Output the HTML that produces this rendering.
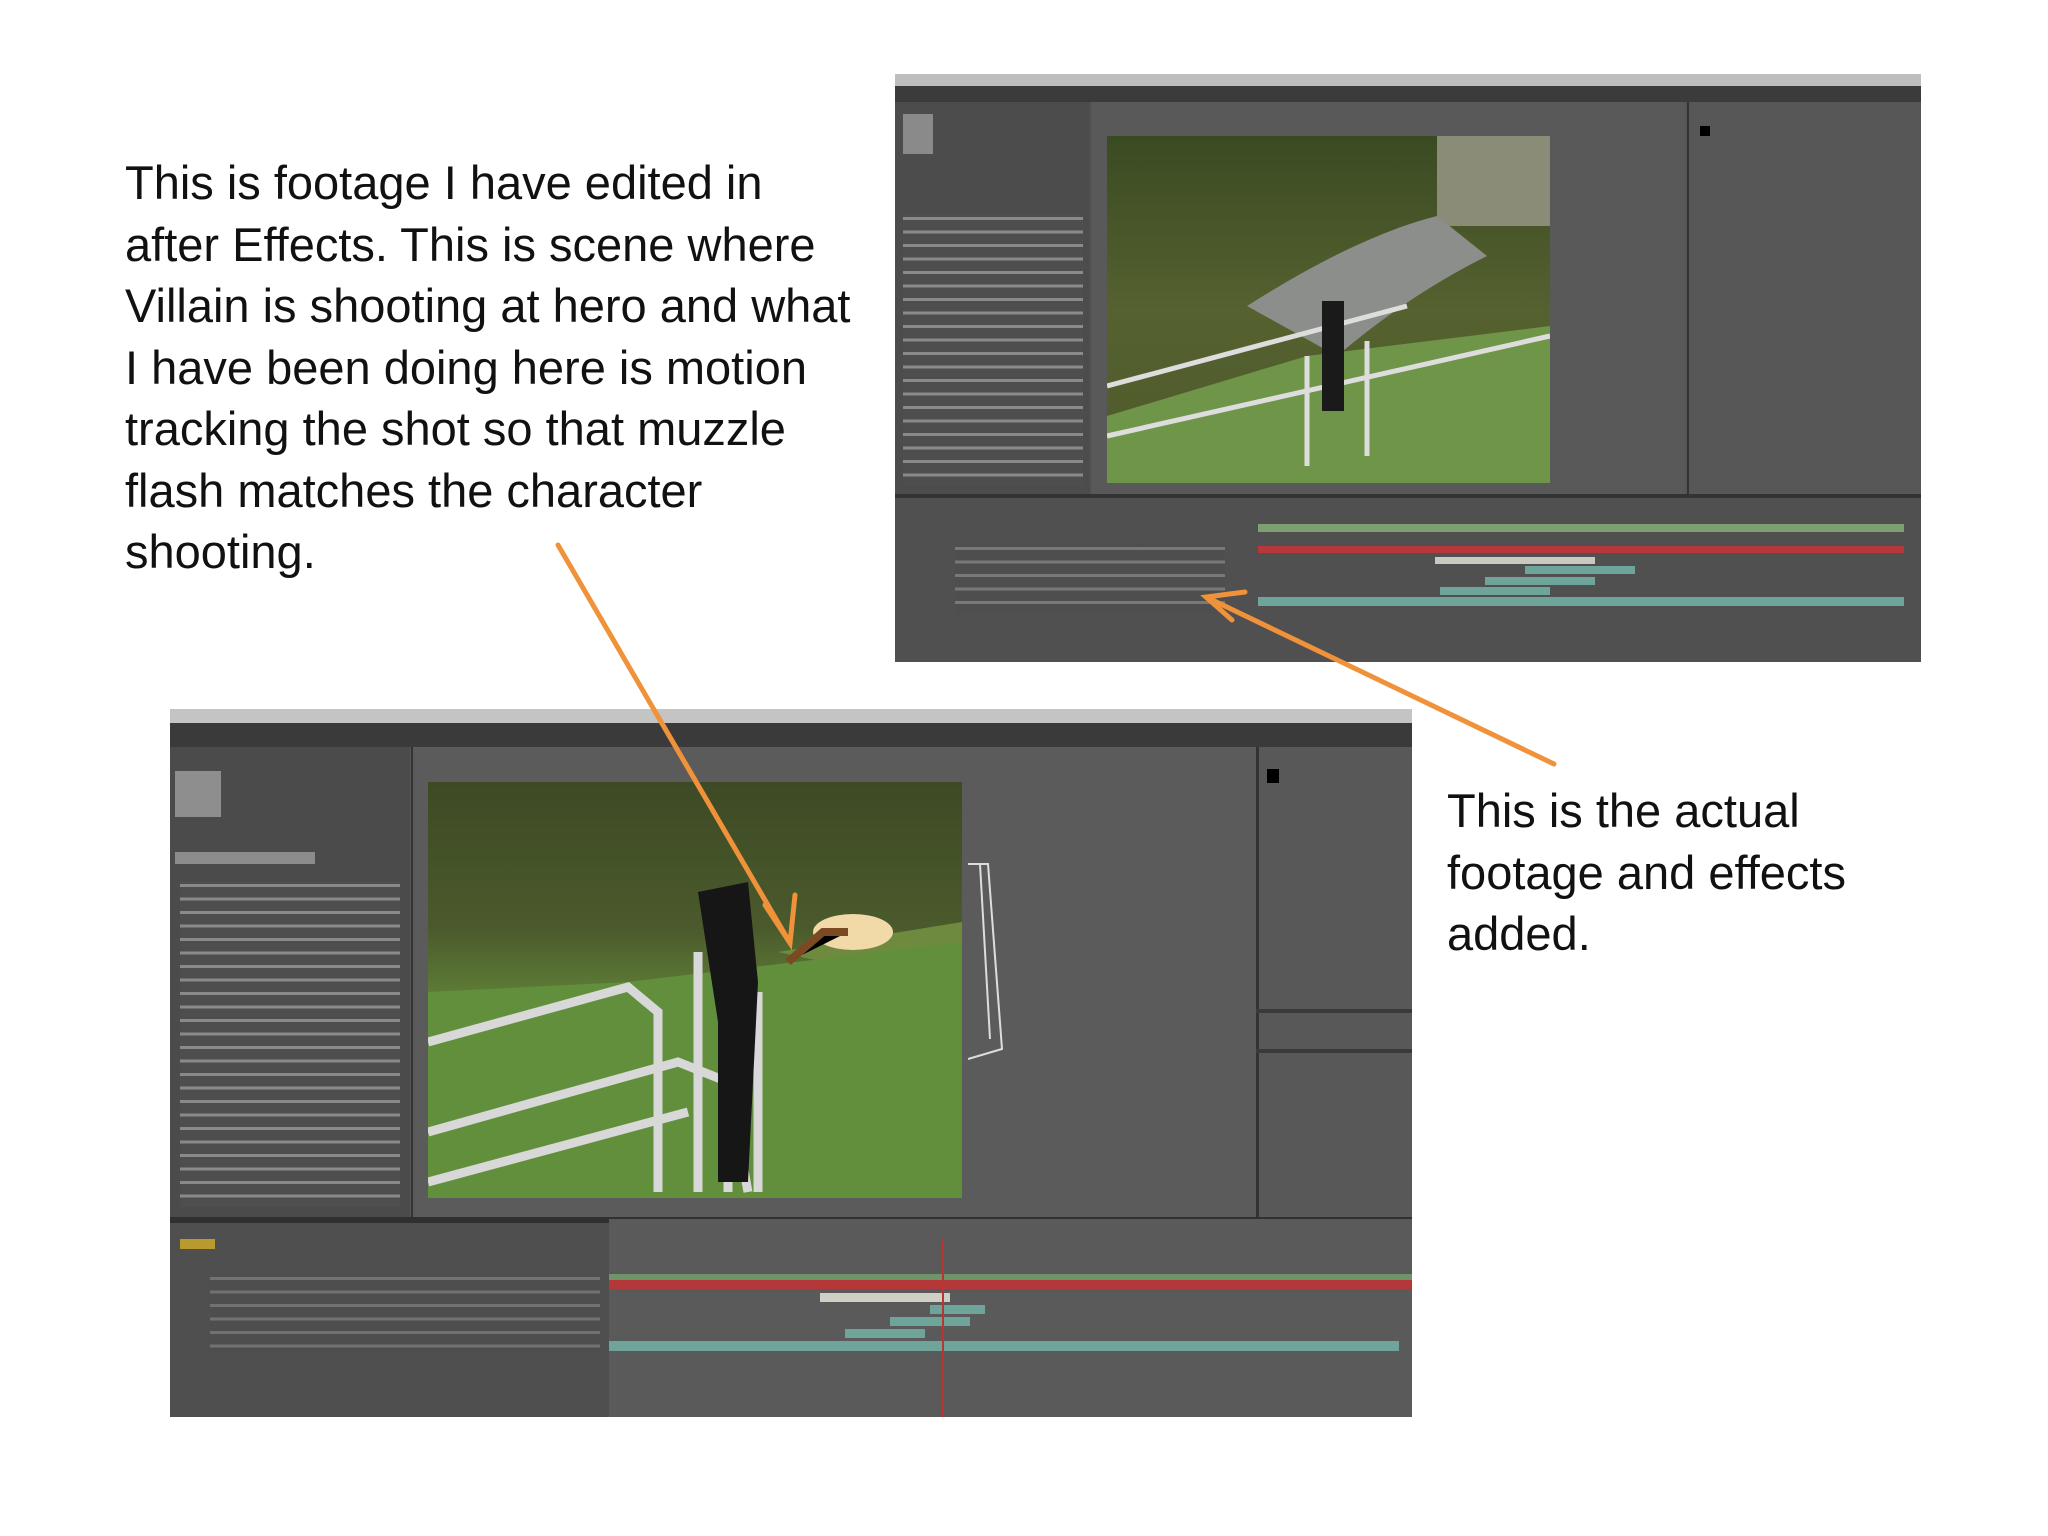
<!DOCTYPE html>
<html><head><meta charset="utf-8"><style>
*{margin:0;padding:0;box-sizing:border-box}
body{width:2048px;height:1536px;background:#fff;position:relative;overflow:hidden;font-family:"Liberation Sans",sans-serif}
.a{position:absolute}
.txt{position:absolute;font-size:47px;line-height:61.5px;color:#111;white-space:nowrap}
.rows{background:repeating-linear-gradient(#4e4e4e 0 3px,#8a8a8a 3px 6px,#4e4e4e 6px 13.5px)}
</style></head><body>

<div class="txt" style="left:125px;top:152px">This is footage I have edited in<br>after Effects. This is scene where<br>Villain is shooting at hero and what<br>I have been doing here is motion<br>tracking the shot so that muzzle<br>flash matches the character<br>shooting.</div>

<div class="txt" style="left:1447px;top:780px">This is the actual<br>footage and effects<br>added.</div>

<!-- TOP SCREENSHOT -->
<div class="a" style="left:895px;top:74px;width:1026px;height:588px;background:#555">
  <div class="a" style="left:0;top:0;width:1026px;height:12px;background:#bdbdbd"></div>
  <div class="a" style="left:0;top:12px;width:1026px;height:16px;background:#3b3b3b"></div>
  <div class="a" style="left:0;top:28px;width:195px;height:392px;background:#4c4c4c"></div>
  <div class="a" style="left:8px;top:40px;width:30px;height:40px;background:#8a8a8a"></div>
  <div class="a rows" style="left:8px;top:140px;width:180px;height:272px"></div>
  <div class="a" style="left:197px;top:28px;width:593px;height:392px;background:#595959"></div>
  <div class="a" style="left:792px;top:28px;width:234px;height:392px;background:#575757;border-left:2px solid #333"></div>
  <div class="a" style="left:805px;top:52px;width:10px;height:10px;background:#000"></div>
  <div class="a" style="left:0;top:420px;width:1026px;height:168px;background:#505050;border-top:4px solid #333"></div>
  <div class="a" style="left:363px;top:450px;width:646px;height:8px;background:#7aa073"></div>
  <div class="a" style="left:363px;top:472px;width:646px;height:7px;background:#b8373a"></div>
  <div class="a" style="left:540px;top:483px;width:160px;height:7px;background:#c9c9c0"></div>
  <div class="a" style="left:630px;top:492px;width:110px;height:8px;background:#6fa49b"></div>
  <div class="a" style="left:590px;top:503px;width:110px;height:8px;background:#6fa49b"></div>
  <div class="a" style="left:545px;top:513px;width:110px;height:8px;background:#6fa49b"></div>
  <div class="a" style="left:363px;top:523px;width:646px;height:9px;background:#6fa49b"></div>
  <div class="a rows" style="left:60px;top:470px;width:270px;height:70px;opacity:.7"></div>
  <svg class="a" style="left:212px;top:62px" width="443" height="347" viewBox="0 0 443 347">
    <defs><linearGradient id="g1" x1="0" y1="0" x2="0" y2="1"><stop offset="0" stop-color="#3a4a22"/><stop offset=".5" stop-color="#55612f"/><stop offset="1" stop-color="#4d5a2a"/></linearGradient></defs>
    <rect width="443" height="347" fill="url(#g1)"/>
    <rect x="330" y="0" width="113" height="90" fill="#8a8c78"/>
    <path d="M140 170 Q250 100 330 80 L380 120 Q300 160 230 220 Z" fill="#8b8e8a"/>
    <path d="M0 280 L200 220 L443 190 L443 347 L0 347Z" fill="#6e9548"/>
    <path d="M0 250 L300 170 M0 300 L443 200 M200 220 L200 330 M260 205 L260 320" stroke="#ddd" stroke-width="5" fill="none"/>
    <rect x="215" y="165" width="22" height="110" fill="#1a1a1a"/>
  </svg>
</div>

<!-- BOTTOM SCREENSHOT -->
<div class="a" style="left:170px;top:709px;width:1242px;height:708px;background:#575757">
  <div class="a" style="left:0;top:0;width:1242px;height:14px;background:#c4c4c4"></div>
  <div class="a" style="left:0;top:14px;width:1242px;height:24px;background:#3a3a3a"></div>
  <div class="a" style="left:0;top:38px;width:240px;height:470px;background:#4b4b4b"></div>
  <div class="a" style="left:5px;top:62px;width:46px;height:46px;background:#8e8e8e"></div>
  <div class="a" style="left:5px;top:143px;width:140px;height:12px;background:#8c8c8c"></div>
  <div class="a rows" style="left:10px;top:172px;width:220px;height:326px"></div>
  <div class="a" style="left:241px;top:38px;width:845px;height:470px;background:#5b5b5b;border-left:2px solid #333"></div>
  <div class="a" style="left:1086px;top:38px;width:156px;height:470px;background:#585858;border-left:3px solid #333"></div>
  <div class="a" style="left:1097px;top:60px;width:12px;height:14px;background:#000"></div>
  <div class="a" style="left:1086px;top:300px;width:156px;height:4px;background:#3a3a3a"></div>
  <div class="a" style="left:1086px;top:340px;width:156px;height:4px;background:#3a3a3a"></div>
  <div class="a" style="left:0;top:508px;width:1242px;height:200px;background:#4f4f4f;border-top:6px solid #303030"></div>
  <div class="a" style="left:439px;top:510px;width:803px;height:198px;background:#5a5a5a"></div>
  <div class="a" style="left:439px;top:565px;width:803px;height:6px;background:#6f946a"></div>
  <div class="a" style="left:439px;top:571px;width:803px;height:9px;background:#b4383a"></div>
  <div class="a" style="left:650px;top:584px;width:130px;height:9px;background:#cfcfc6"></div>
  <div class="a" style="left:760px;top:596px;width:55px;height:9px;background:#6fa49b"></div>
  <div class="a" style="left:720px;top:608px;width:80px;height:9px;background:#6fa49b"></div>
  <div class="a" style="left:675px;top:620px;width:80px;height:9px;background:#6fa49b"></div>
  <div class="a" style="left:439px;top:632px;width:790px;height:10px;background:#6fa49b"></div>
  <div class="a" style="left:772px;top:530px;width:2px;height:178px;background:#b33"></div>
  <div class="a" style="left:10px;top:530px;width:35px;height:10px;background:#b99a2e"></div>
  <div class="a rows" style="left:40px;top:565px;width:390px;height:80px;opacity:.6"></div>
  <svg class="a" style="left:258px;top:73px" width="534" height="416" viewBox="0 0 534 416">
    <defs><linearGradient id="g2" x1="0" y1="0" x2="0" y2="1"><stop offset="0" stop-color="#3d4a25"/><stop offset=".35" stop-color="#4b5a2c"/><stop offset=".5" stop-color="#5c7a35"/><stop offset="1" stop-color="#5f8a3a"/></linearGradient></defs>
    <rect width="534" height="416" fill="url(#g2)"/>
    <path d="M350 170 L534 140 L534 210 Z" fill="#6e8a3e"/>
    <path d="M0 210 L200 200 L534 160 L534 416 L0 416Z" fill="#628f3c"/>
    <path d="M0 260 L200 205 L230 230 L230 410 M0 350 L250 280 L300 300 L320 410 M0 400 L260 330 M270 170 L270 410 M300 190 L300 410 M330 210 L330 410" stroke="#d8d8d8" stroke-width="9" fill="none"/>
    <path d="M270 110 L320 100 L330 200 L320 400 L290 400 L290 240 Z" fill="#161616"/>
    <ellipse cx="425" cy="150" rx="40" ry="18" fill="#f1d9a8"/>
    <path d="M360 180 L395 150 L420 150" stroke="#7b4a22" stroke-width="8"/>
  </svg>
  <svg class="a" style="left:790px;top:150px" width="60" height="210"><path d="M8 5 L28 5 L42 190 L8 200 M20 5 L30 180" stroke="#ddd" stroke-width="2" fill="none"/></svg>
</div>

<!-- ARROWS -->
<svg class="a" style="left:0;top:0" width="2048" height="1536">
  <g stroke="#f0923a" stroke-width="5" fill="none" stroke-linecap="round">
    <path d="M558 545 L790 943"/>
    <path d="M765 905 L790 943 L795 895"/>
    <path d="M1554 764 L1206 597"/>
    <path d="M1232 620 L1206 597 L1245 592"/>
  </g>
</svg>
</body></html>
